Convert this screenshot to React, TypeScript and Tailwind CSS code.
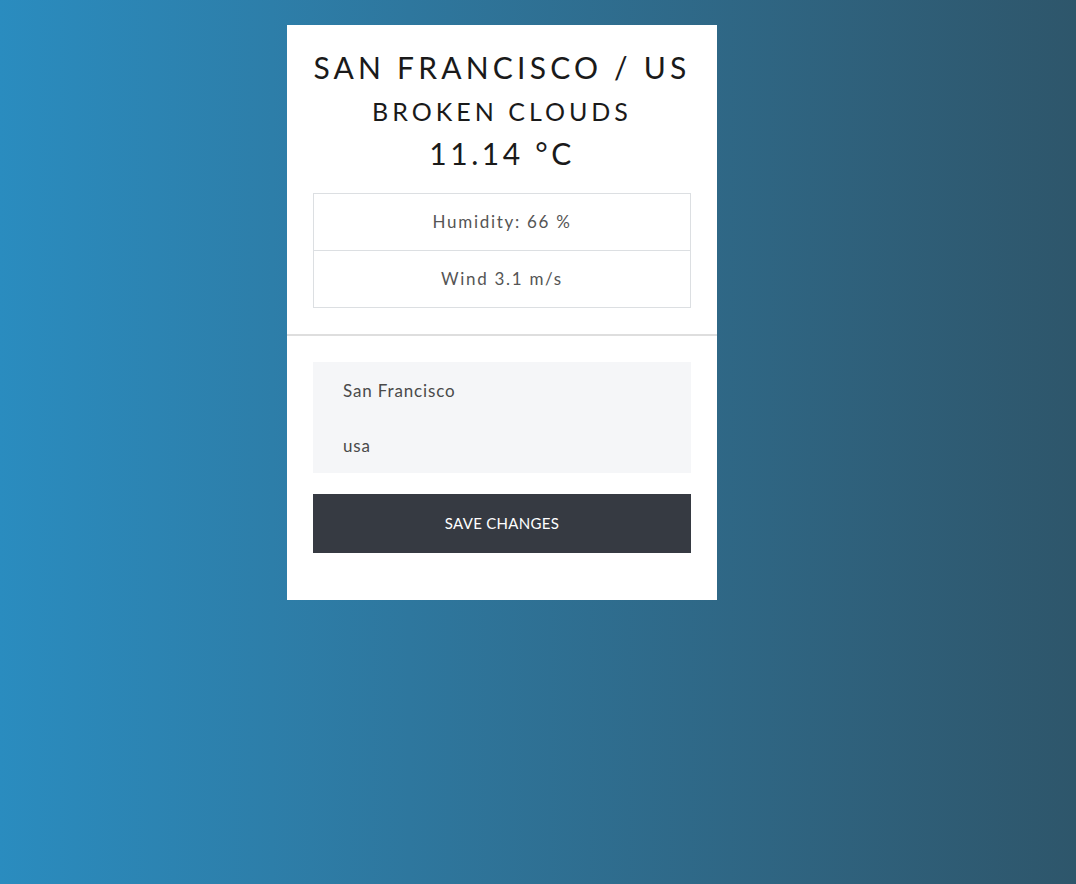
import React from 'react';

export default function App() {
  return (
    <div className="min-h-screen w-full bg-gradient-to-r from-[#2a8cbf] to-[#2e566b] font-['Lato','Noto_Sans',sans-serif]">
      <div className="flex justify-center pt-[25px] pr-[72px]">
        <div className="w-[430px] bg-white">
          <div className="px-[26px] pt-[22px] pb-[26px] text-center text-[#1a1a1a]">
            <h1 className="text-[30px] leading-[40px] tracking-[0.14em] uppercase">San Francisco / US</h1>
            <h2 className="text-[25px] leading-[48px] tracking-[0.16em] uppercase">Broken Clouds</h2>
            <h3 className="text-[30px] leading-[36px] tracking-[0.12em]">11.14 °C</h3>
            <div className="mt-[22px] border border-[#dcdfe2] text-[#555] text-[17px] tracking-[0.1em]">
              <div className="h-[57px] flex items-center justify-center border-b border-[#dcdfe2]">Humidity: 66 %</div>
              <div className="h-[56px] flex items-center justify-center">Wind 3.1 m/s</div>
            </div>
          </div>
          <div className="border-t-2 border-[#dedede] px-[26px] pt-[26px] pb-[47px]">
            <div className="bg-[#f5f6f8]">
              <input className="block w-full h-[56px] bg-transparent px-[30px] text-[17px] tracking-[0.05em] text-[#4a4a4a] outline-none" defaultValue="San Francisco" />
              <input className="block w-full h-[55px] bg-transparent px-[30px] text-[17px] tracking-[0.05em] text-[#4a4a4a] outline-none" defaultValue="usa" />
            </div>
            <button className="mt-[21px] w-full h-[59px] bg-[#363a42] text-white text-[15px] tracking-[0.02em] uppercase">Save Changes</button>
          </div>
        </div>
      </div>
    </div>
  );
}
